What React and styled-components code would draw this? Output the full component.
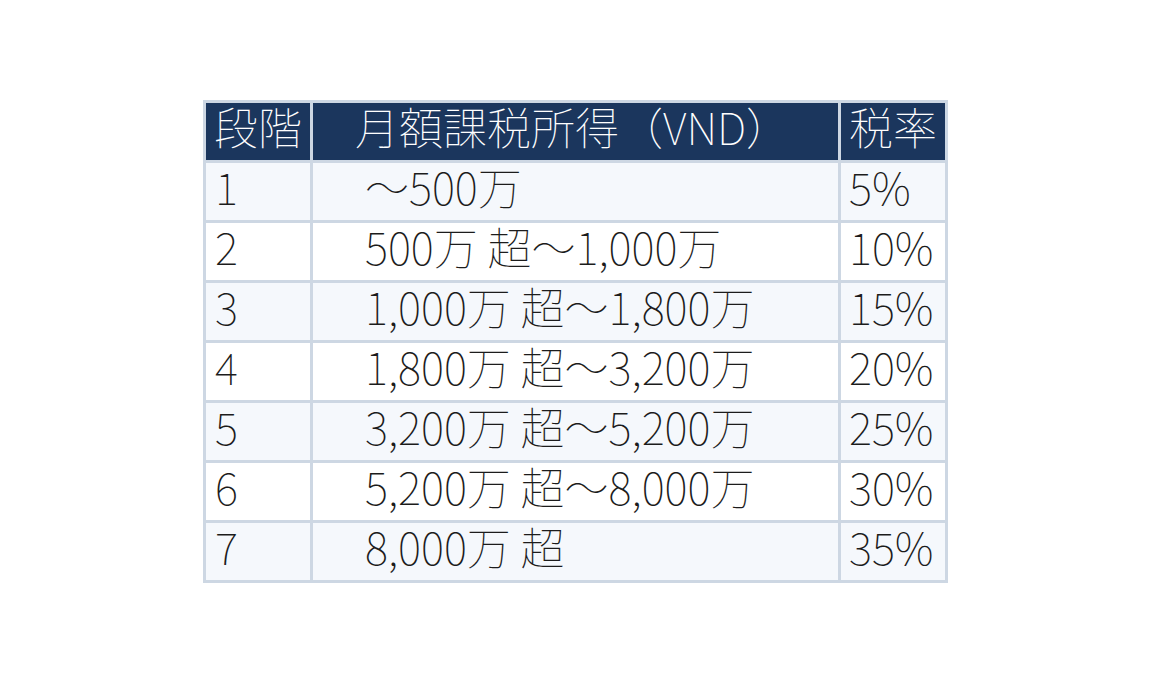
import styled, { createGlobalStyle } from "styled-components";

const GlobalStyle = createGlobalStyle`
  html, body {
    margin: 0;
    padding: 0;
    background: #ffffff;
  }
  body {
    font-family: "Noto Sans CJK JP Thin", "Noto Sans CJK JP Light", "Noto Sans CJK JP", sans-serif;
  }
`;

const Page = styled.div`
  width: 100%;
  height: 100vh;
  display: flex;
  align-items: center;
  justify-content: center;
`;

const Table = styled.table`
  border-collapse: collapse;
  table-layout: fixed;
  border: 3px solid #cdd7e3;
  font-family: "Noto Sans CJK JP Thin", "Noto Sans CJK JP Light", "Noto Sans CJK JP", sans-serif;
  font-weight: 100;
  font-size: 44px;
`;

const Row = styled.tr`
  height: 60px;
  background: ${p => (p.$odd ? "#f5f8fc" : "#ffffff")};
`;

const Head = styled.th`
  width: ${p => p.$w}px;
  background: #1b365d;
  color: #ffffff;
  font-weight: 100;
  text-align: left;
  padding: 0 0 10px ${p => p.$pad}px;
  border: 3px solid #cdd7e3;
  line-height: 44px;
  white-space: nowrap;
`;

const Cell = styled.td`
  color: #1c1c1c;
  padding: 0 0 10px ${p => p.$pad}px;
  border: 3px solid #cdd7e3;
  line-height: 44px;
  white-space: nowrap;
`;

const rows = [
  ["1", "～500万", "5%"],
  ["2", "500万 超～1,000万", "10%"],
  ["3", "1,000万 超～1,800万", "15%"],
  ["4", "1,800万 超～3,200万", "20%"],
  ["5", "3,200万 超～5,200万", "25%"],
  ["6", "5,200万 超～8,000万", "30%"],
  ["7", "8,000万 超", "35%"],
];

export default function App() {
  return (
    <Page>
      <GlobalStyle />
      <Table>
        <thead>
          <Row>
            <Head $w={96} $pad={8}>段階</Head>
            <Head $w={483} $pad={42}>月額課税所得（VND）</Head>
            <Head $w={96} $pad={8}>税率</Head>
          </Row>
        </thead>
        <tbody>
          {rows.map(([step, range, rate], i) => (
            <Row key={step} $odd={i % 2 === 0}>
              <Cell $pad={9}>{step}</Cell>
              <Cell $pad={52}>{range}</Cell>
              <Cell $pad={8}>{rate}</Cell>
            </Row>
          ))}
        </tbody>
      </Table>
    </Page>
  );
}
